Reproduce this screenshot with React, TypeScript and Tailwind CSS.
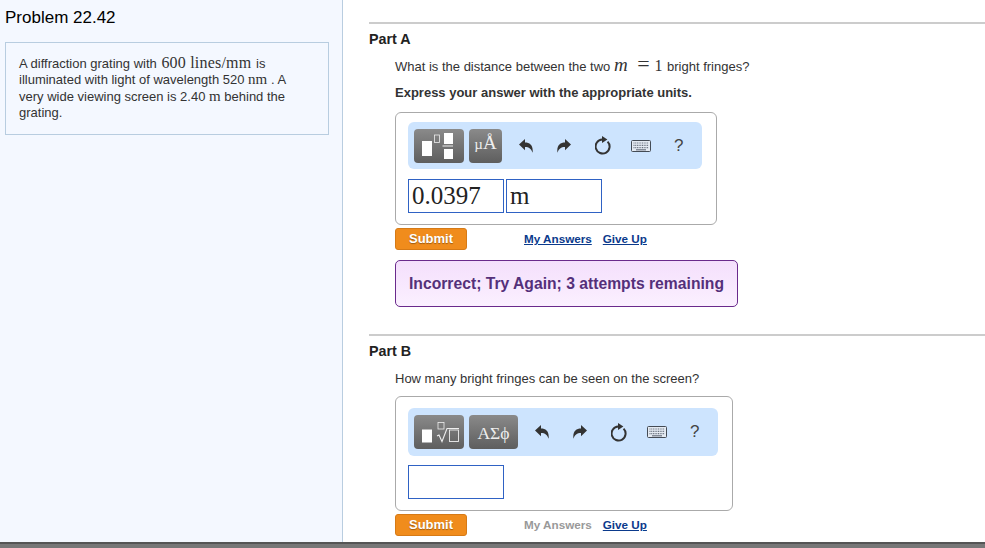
import React from 'react';

const serif = 'font-["Liberation_Serif",serif]';

const Undo = ({ flip }: { flip?: boolean }) => (
  <svg width="14" height="14" viewBox="0 0 14 14" className={flip ? '-scale-x-100' : ''}>
    <path d="M0 5.5L6 0v3.4c5 0 8.4 3 7.6 10.4C12.4 9.8 10 8 6 8v3.2z" fill="#333" />
  </svg>
);

const Keyboard = () => (
  <svg width="20" height="12" viewBox="0 0 20 12">
    <rect x="0.5" y="0.5" width="19" height="11" rx="1" fill="#e4eaf2" stroke="#444b55" />
    <path d="M2.5 3h15M2.5 5.3h15M2.5 7.6h15" stroke="#6b7380" strokeWidth="1.2" strokeDasharray="1 0.7" />
    <path d="M5 9.8h10" stroke="#6b7380" strokeWidth="1.2" />
  </svg>
);

const Reset = () => (
  <svg width="16" height="19" viewBox="0 0 16 19">
    <path d="M12.6 5.6a7 7 0 1 1-5.4-2.1" fill="none" stroke="#333" strokeWidth="2" />
    <path d="M7 0l5.4 3.5L7 7z" fill="#333" />
  </svg>
);

const FractionIcon = () => (
  <svg width="31" height="26" viewBox="0 0 31 26" className="-ml-[3px]">
    <rect x="0" y="8" width="10" height="15" fill="#fff" />
    <rect x="12.5" y="2" width="5" height="7.5" fill="none" stroke="#eee" strokeWidth="0.8" />
    <rect x="22" y="0" width="9" height="11" fill="#fff" />
    <rect x="20.5" y="12.5" width="10.5" height="1" fill="#eee" />
    <rect x="22" y="16" width="9" height="10" fill="#fff" />
  </svg>
);

const RootIcon = () => (
  <svg width="37" height="21" viewBox="0 0 37 21" className="ml-[3px]">
    <rect x="0" y="7.5" width="10" height="13" fill="#fff" />
    <rect x="16" y="0.5" width="6" height="6.5" fill="none" stroke="#eee" strokeWidth="0.8" />
    <path d="M15 14l2-1 3 6.5L25 6.5h12" fill="none" stroke="#eee" strokeWidth="1.1" />
    <rect x="27.5" y="8" width="9" height="11.5" fill="none" stroke="#eee" strokeWidth="0.9" />
  </svg>
);

const Toolbar = ({ className, first, label, second }: { className: string; first: React.ReactNode; label: React.ReactNode; second: string }) => (
  <div className={`flex items-center rounded-md bg-[#cde4fe] pl-[6px] text-[#333] ${className}`}>
    <div className="flex h-[34px] w-[50px] items-center justify-center rounded bg-gradient-to-b from-[#8a8a8a] to-[#5e5e5e]">
      {first}
    </div>
    <div className={`ml-[5px] flex h-[34px] items-end justify-center rounded bg-gradient-to-b from-[#8a8a8a] to-[#5e5e5e] pb-[7px] text-[#eee] ${serif} ${second}`}>
      {label}
    </div>
    <div className="ml-[17px]"><Undo /></div>
    <div className="ml-[24px]"><Undo flip /></div>
    <div className="ml-[24px]"><Reset /></div>
    <div className="ml-[20px]"><Keyboard /></div>
    <span className="ml-[23px] text-[17px] text-[#444]">?</span>
  </div>
);

const Field = ({ value }: { value?: string }) => (
  <div className={`flex h-[34px] w-[96px] items-center border border-[#2f62c4] bg-white pl-[3px] text-[25px] text-[#222] ${serif}`}>
    {value}
  </div>
);

const Actions = ({ answersMuted }: { answersMuted?: boolean }) => (
  <div className="flex items-center">
    <button className="h-[22px] w-[72px] rounded-[3px] border border-[#d67a16] bg-[#f08c1c] text-[13px] font-bold text-white [text-shadow:0_1px_1px_rgba(0,0,0,0.35)]">
      Submit
    </button>
    {answersMuted ? (
      <span className="ml-[57px] text-[11.7px] font-bold text-[#999]">My Answers</span>
    ) : (
      <a className="ml-[57px] text-[11.7px] font-bold text-[#0b3a8c] underline">My Answers</a>
    )}
    <a className="ml-[11px] text-[11.7px] font-bold text-[#0b3a8c] underline">Give Up</a>
  </div>
);

export default function App() {
  return (
    <div className='flex h-screen flex-col overflow-hidden bg-white font-["Liberation_Sans",Arial,sans-serif] text-[#333]'>
      <div className="flex min-h-0 flex-1">
        {/* Left panel */}
        <aside className="w-[343px] shrink-0 border-r border-[#b9cde0] bg-[#f4f8ff] pl-[5px] pr-[13px]">
          <h1 className="mt-[8px] text-[17px] leading-[20px] text-black">Problem 22.42</h1>
          <div className="mt-[14px] h-[93px] border border-[#b8cde0] pl-[13px] pr-[20px] pt-[13px] text-[13px] leading-[16.4px]">
            A diffraction grating with <span className={`${serif} ml-[1px] text-[16px] leading-[0] tracking-[0.2px]`}>600 lines/mm</span> <span className="ml-[1px]">is</span> illuminated with light of wavelength 520 <span className={`${serif} text-[15px] leading-[0]`}>nm</span> . A very wide viewing screen is 2.40 <span className={`${serif} text-[15px] leading-[0]`}>m</span> behind the grating.
          </div>
        </aside>

        {/* Parts */}
        <main className="min-w-0 flex-1 pl-[26px] pt-[22px]">
          <section className="border-t-2 border-[#cccccc] pt-[7px]">
            <h2 className="text-[14.3px] font-bold leading-[16px] text-[#222]">Part A</h2>
            <div className="pl-[26px]">
              <p className="mt-[12px] text-[13px] leading-[16px]">
                What is the distance between the two <span className={`${serif} italic text-[19px] leading-[0]`}>m</span> <span className={`${serif} ml-[6px] text-[22px] leading-[0]`}>=</span> <span className={`${serif} ml-[1px] text-[16px] leading-[0]`}>1</span> <span className="ml-[1px]">bright fringes?</span>
              </p>
              <p className="mt-[10px] text-[13px] font-bold leading-[16px]">Express your answer with the appropriate units.</p>
              <div className="mt-[11px] h-[113px] w-[322px] rounded-md border border-[#aaaaaa] px-[12px] pt-[9px]">
                <Toolbar className="h-[47px] w-[294px]" first={<FractionIcon />} label={<span><span className="text-[15px]">µ</span><span className="text-[19px] leading-[20px]">Å</span></span>} second="w-[33px]" />
                <div className="mt-[10px] flex gap-[2px]">
                  <Field value="0.0397" />
                  <Field value="m" />
                </div>
              </div>
              <div className="mt-[3px]"><Actions /></div>
              <div className="mt-[10px] flex h-[47px] w-[343px] items-center rounded-[5px] border border-[#6a2a8c] bg-gradient-to-b from-[#f4dffc] to-[#fbf0ff] pl-[13px] text-[15.7px] font-bold text-[#54307a]">
                Incorrect; Try Again; 3 attempts remaining
              </div>
            </div>
          </section>

          <section className="mt-[27px] border-t-2 border-[#cccccc] pt-[7px]">
            <h2 className="text-[14.3px] font-bold leading-[16px] text-[#222]">Part B</h2>
            <div className="pl-[26px]">
              <p className="mt-[12px] text-[13px] leading-[16px]">How many bright fringes can be seen on the screen?</p>
              <div className="mt-[9px] h-[115px] w-[338px] rounded-md border border-[#aaaaaa] px-[12px] pt-[11px]">
                <Toolbar className="h-[48px] w-[310px]" first={<RootIcon />} label={<span className="text-[17.5px] leading-[18px]">ΑΣϕ</span>} second="w-[49px]" />
                <div className="mt-[9px]">
                  <Field />
                </div>
              </div>
              <div className="mt-[3px]"><Actions answersMuted /></div>
            </div>
          </section>
        </main>
      </div>
      <div className="h-[6px] shrink-0 border-t-2 border-[#555] bg-[#777]" />
    </div>
  );
}
